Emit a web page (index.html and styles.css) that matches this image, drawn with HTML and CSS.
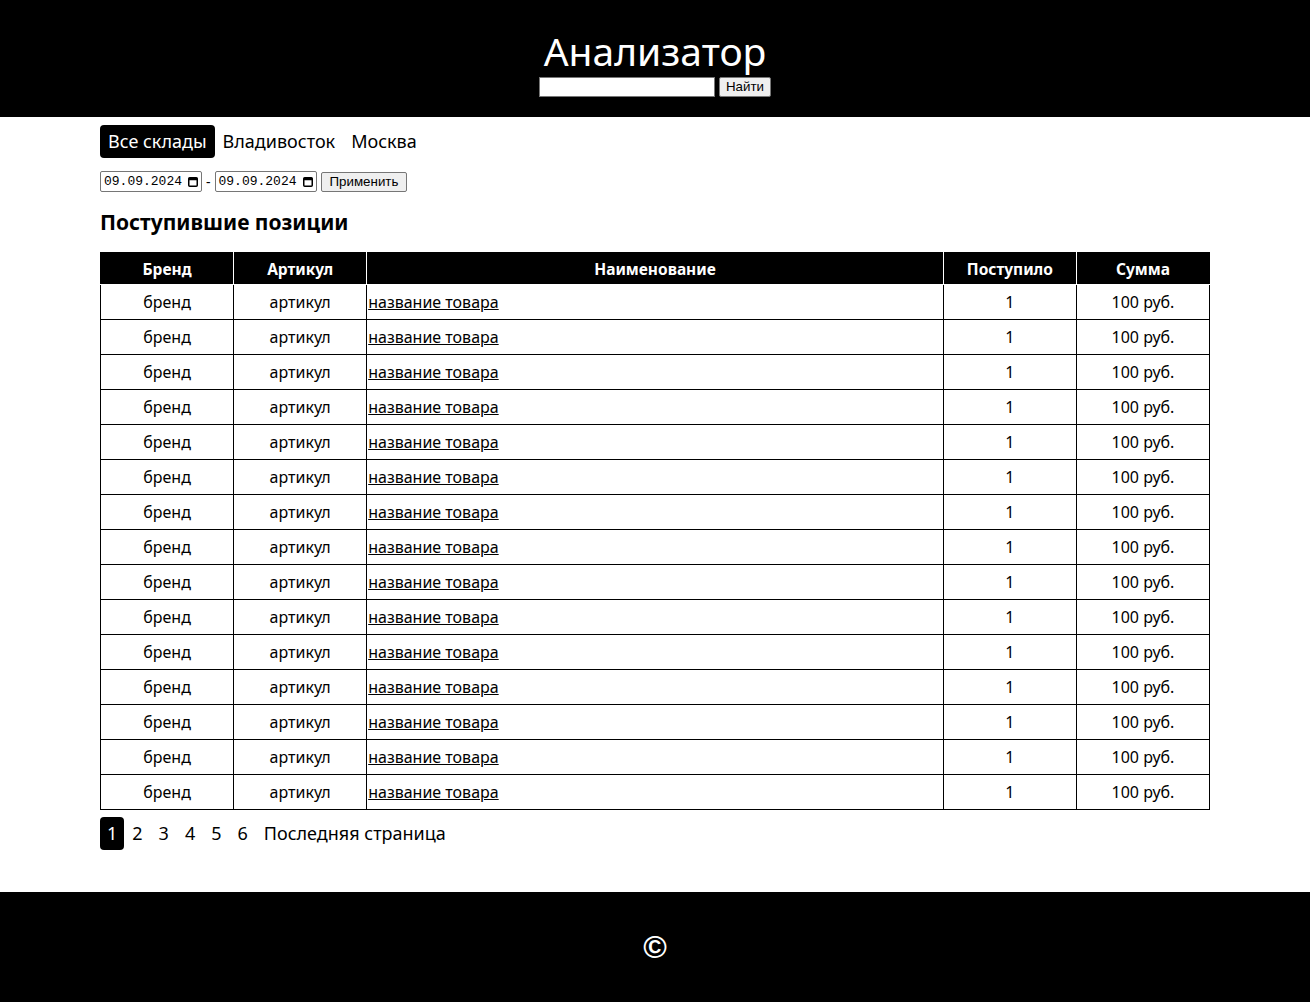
FILE: index.html
```html
<!DOCTYPE html>
<html lang="ru">
<head>
<meta charset="utf-8">
<title>Анализатор</title>
<link rel="stylesheet" href="styles.css">
</head>
<body>
<header class="header">
  <h1 class="title">Анализатор</h1>
  <form class="search">
    <input class="search-input" type="text">
    <button class="btn" type="button">Найти</button>
  </form>
</header>
<main class="main">
  <nav class="tabs">
    <a class="tab active">Все склады</a>
    <a class="tab">Владивосток</a>
    <a class="tab">Москва</a>
  </nav>
  <div class="dates">
    <label class="date"><span class="date-text">09.09.2024</span><svg class="cal" width="10" height="11" viewBox="0 0 10 11"><rect x="0.75" y="1.75" width="8.5" height="8.5" rx="1" fill="none" stroke="#000" stroke-width="1.5"/><rect x="0.75" y="1.75" width="8.5" height="2.5" fill="#000"/></svg></label>
    <span class="dash">-</span>
    <label class="date"><span class="date-text">09.09.2024</span><svg class="cal" width="10" height="11" viewBox="0 0 10 11"><rect x="0.75" y="1.75" width="8.5" height="8.5" rx="1" fill="none" stroke="#000" stroke-width="1.5"/><rect x="0.75" y="1.75" width="8.5" height="2.5" fill="#000"/></svg></label>
    <button class="btn btn-apply" type="button">Применить</button>
  </div>
  <h2 class="heading">Поступившие позиции</h2>
  <table class="table">
    <thead>
      <tr><th class="col-s">Бренд</th><th class="col-s">Артикул</th><th>Наименование</th><th class="col-s">Поступило</th><th class="col-s">Сумма</th></tr>
    </thead>
    <tbody>
      <tr><td>бренд</td><td>артикул</td><td class="name"><a href="#">название товара</a></td><td>1</td><td>100 руб.</td></tr>
      <tr><td>бренд</td><td>артикул</td><td class="name"><a href="#">название товара</a></td><td>1</td><td>100 руб.</td></tr>
      <tr><td>бренд</td><td>артикул</td><td class="name"><a href="#">название товара</a></td><td>1</td><td>100 руб.</td></tr>
      <tr><td>бренд</td><td>артикул</td><td class="name"><a href="#">название товара</a></td><td>1</td><td>100 руб.</td></tr>
      <tr><td>бренд</td><td>артикул</td><td class="name"><a href="#">название товара</a></td><td>1</td><td>100 руб.</td></tr>
      <tr><td>бренд</td><td>артикул</td><td class="name"><a href="#">название товара</a></td><td>1</td><td>100 руб.</td></tr>
      <tr><td>бренд</td><td>артикул</td><td class="name"><a href="#">название товара</a></td><td>1</td><td>100 руб.</td></tr>
      <tr><td>бренд</td><td>артикул</td><td class="name"><a href="#">название товара</a></td><td>1</td><td>100 руб.</td></tr>
      <tr><td>бренд</td><td>артикул</td><td class="name"><a href="#">название товара</a></td><td>1</td><td>100 руб.</td></tr>
      <tr><td>бренд</td><td>артикул</td><td class="name"><a href="#">название товара</a></td><td>1</td><td>100 руб.</td></tr>
      <tr><td>бренд</td><td>артикул</td><td class="name"><a href="#">название товара</a></td><td>1</td><td>100 руб.</td></tr>
      <tr><td>бренд</td><td>артикул</td><td class="name"><a href="#">название товара</a></td><td>1</td><td>100 руб.</td></tr>
      <tr><td>бренд</td><td>артикул</td><td class="name"><a href="#">название товара</a></td><td>1</td><td>100 руб.</td></tr>
      <tr><td>бренд</td><td>артикул</td><td class="name"><a href="#">название товара</a></td><td>1</td><td>100 руб.</td></tr>
      <tr><td>бренд</td><td>артикул</td><td class="name"><a href="#">название товара</a></td><td>1</td><td>100 руб.</td></tr>
    </tbody>
  </table>
  <nav class="pages">
    <a class="page active">1</a>
    <a class="page">2</a>
    <a class="page">3</a>
    <a class="page">4</a>
    <a class="page">5</a>
    <a class="page">6</a>
    <a class="page">Последняя страница</a>
  </nav>
</main>
<footer class="footer">©</footer>
</body>
</html>
```

FILE: styles.css
```css
* { box-sizing: border-box; }
html, body { margin: 0; padding: 0; }
body {
  font-family: "Comic Sans MS", "Noto Sans", sans-serif;
  color: #000;
  background: #fff;
}
.header {
  background: #000;
  color: #fff;
  height: 117px;
  display: flex;
  flex-direction: column;
  align-items: center;
  padding-top: 25px;
}
.title {
  margin: 0;
  font-size: 39px;
  font-weight: normal;
  line-height: 52px;
}
.search {
  display: flex;
  gap: 4px;
  margin: 0;
}
.search-input {
  width: 176px;
  height: 20px;
  border: 1px solid #767676;
  padding: 1px 2px;
}
.btn {
  font-family: Arial, "Liberation Sans", sans-serif;
  font-size: 13.33px;
  height: 20px;
  line-height: 16px;
  padding: 1px 6px;
  border: 1px solid #767676;
  background: #efefef;
  border-radius: 2px;
  color: #000;
}
.btn-apply { padding: 1px 8px; }
.main {
  max-width: 1110px;
  margin: 0 auto;
  padding-top: 8px;
  padding-bottom: 42px;
}
.tabs {
  display: flex;
  font-size: 18px;
}
.tab {
  padding: 5px 8px;
  border-radius: 4px;
  line-height: 23px;
}
.tab.active {
  background: #000;
  color: #fff;
}
.dates {
  display: flex;
  align-items: center;
  gap: 4px;
  margin-top: 13px;
}
.date {
  display: flex;
  align-items: center;
  justify-content: space-between;
  font-family: "Liberation Mono", monospace;
  font-size: 13px;
  height: 21px;
  border: 1px solid #767676;
  border-radius: 2px;
  padding: 0 3px 0 3px;
  width: 102px;
}
.cal { display: block; }
.dash { font-size: 14px; }
.heading {
  margin: 16px 0 16px;
  font-size: 21px;
  line-height: 28px;
}
.table {
  width: 100%;
  border-collapse: collapse;
  font-size: 16px;
}
.table th {
  background: #000;
  color: #fff;
  height: 32px;
  border: 1px solid #fff;
  border-top-color: #000;
  font-size: 15.5px;
  padding: 1px;
}
.table th:first-child { border-left-color: #000; }
.table th:last-child { border-right-color: #000; }
.col-s { width: 12%; }
.table td {
  height: 35px;
  border: 1px solid #000;
  text-align: center;
  padding: 1px;
}
.table td.name { text-align: left; }
.table a { color: #000; }
.pages {
  display: flex;
  margin-top: 7px;
  font-size: 18px;
}
.page {
  padding: 4px 8px;
  line-height: 25px;
  border-radius: 4px;
}
.page.active {
  background: #000;
  color: #fff;
  padding: 4px 7px;
}
.footer {
  background: #000;
  color: #fff;
  height: 110px;
  display: flex;
  align-items: center;
  justify-content: center;
  font-size: 32px;
  font-weight: bold;
  font-family: Arial, "Liberation Sans", sans-serif;
}
```
